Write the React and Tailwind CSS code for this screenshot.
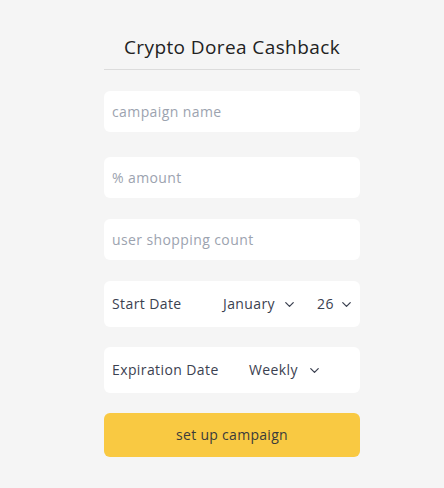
import { ChevronDown } from "lucide-react";

const font = { fontFamily: '"Open Sans", "Noto Sans", sans-serif' };

function TextField({ placeholder, className = "" }) {
  return (
    <input
      type="text"
      placeholder={placeholder}
      className={`block w-full h-[41px] rounded-md bg-white px-2 text-[14px] tracking-[0.4px] text-gray-700 placeholder:text-[#9ca3af] outline-none ${className}`}
    />
  );
}

export default function App() {
  return (
    <div className="min-h-[488px] bg-[#f5f5f5] pt-[35px]" style={font}>
      <div className="w-[256px] ml-[104px]">
        {/* Title */}
        <h1 className="text-center text-[19px] leading-[24px] tracking-[0.4px] text-[#222]">
          Crypto Dorea Cashback
        </h1>
        <div className="mt-[10px] border-t border-[#dcdcdc]" />

        {/* Inputs */}
        <TextField placeholder="campaign name" className="mt-[21px]" />
        <TextField placeholder="% amount" className="mt-[25px]" />
        <TextField placeholder="user shopping count" className="mt-[21px]" />

        {/* Start date */}
        <div className="mt-[21px] h-[46px] rounded-md bg-white flex items-center pl-2 pb-[2px] text-[14px] tracking-[0.4px] text-[#3b4150]">
          <span className="w-[111px]">Start Date</span>
          <span className="flex items-center">
            January
            <ChevronDown size={15} strokeWidth={2} className="ml-[7px] mt-[3px]" />
          </span>
          <span className="flex items-center ml-[20px]">
            26
            <ChevronDown size={15} strokeWidth={2} className="ml-[5px] mt-[3px]" />
          </span>
        </div>

        {/* Expiration date */}
        <div className="mt-[20px] h-[46px] rounded-md bg-white flex items-center pl-2 pb-[2px] text-[14px] tracking-[0.4px] text-[#3b4150]">
          <span className="w-[137px]">Expiration Date</span>
          <span className="flex items-center">
            Weekly
            <ChevronDown size={15} strokeWidth={2} className="ml-[9px] mt-[3px]" />
          </span>
        </div>

        {/* Submit */}
        <button className="mt-[20px] w-full h-[44px] rounded-md bg-[#f9c942] pb-[2px] text-[14px] tracking-[0.3px] text-[#3b3b3b]">
          set up campaign
        </button>
      </div>
    </div>
  );
}
